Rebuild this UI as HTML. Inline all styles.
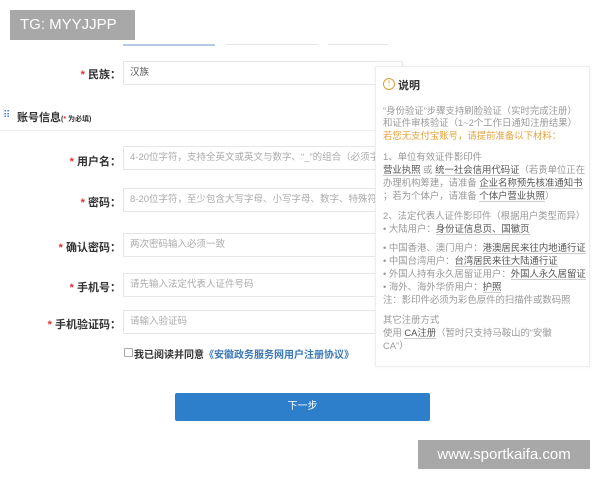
<!DOCTYPE html>
<html><head><meta charset="utf-8"><style>
body{margin:0;width:600px;height:480px;background:#fff;position:relative;overflow:hidden;font-family:"Liberation Sans","Noto Sans CJK SC",sans-serif;}
.a{position:absolute;}
.inp{position:absolute;left:123px;width:280px;height:24px;border:1px solid #e6e6e6;box-sizing:border-box;font-size:9.5px;color:#aaa;line-height:22px;padding-left:6px;white-space:nowrap;overflow:hidden;}
.lab{position:absolute;right:479px;font-size:11px;font-weight:bold;color:#333;white-space:nowrap;}
.lab b{color:#d33;font-weight:bold;}
.p{position:absolute;left:383px;font-size:9.4px;color:#999;white-space:nowrap;}
.p u{color:#555;text-decoration:none;border-bottom:1px solid #ccc;}
</style></head><body>
<div class="a" style="left:10px;top:10px;width:125px;height:30px;background:#a8a8a8;color:#fff;font-size:15px;line-height:30px;padding-left:10px;box-sizing:border-box">TG: MYYJJPP</div>
<div class="a" style="left:123px;top:44px;width:92px;height:2px;background:#b5c9e3"></div>
<div class="a" style="left:226px;top:44px;width:92px;height:1px;background:#e6e6e6"></div>
<div class="a" style="left:328px;top:44px;width:60px;height:1px;background:#e6e6e6"></div>
<div class="lab" style="top:66px"><b>* </b>民族：</div>
<div class="inp" style="top:61px;color:#555">汉族</div>
<div class="a" style="left:3px;top:110px;font-size:10px;color:#3a7bd5;letter-spacing:-1px">⠿</div>
<div class="a" style="left:17px;top:109px;font-size:11px;font-weight:bold;color:#333">账号信息<span style="font-size:7px">(<span style="color:#d33">* </span>为必填)</span></div>
<div class="a" style="left:0;top:130px;width:380px;height:1px;background:#eee"></div>
<div class="lab" style="top:153px"><b>* </b>用户名：</div>
<div class="inp" style="top:146px">4-20位字符，支持全英文或英文与数字、“_”的组合（必须字</div>
<div class="lab" style="top:194px"><b>* </b>密码：</div>
<div class="inp" style="top:188px">8-20位字符，至少包含大写字母、小写字母、数字、特殊符号中</div>
<div class="lab" style="top:239px"><b>* </b>确认密码：</div>
<div class="inp" style="top:233px">两次密码输入必须一致</div>
<div class="lab" style="top:279px"><b>* </b>手机号：</div>
<div class="inp" style="top:273px">请先输入法定代表人证件号码</div>
<div class="lab" style="top:316px"><b>* </b>手机验证码：</div>
<div class="inp" style="top:310px">请输入验证码</div>
<div class="a" style="left:124px;top:348px;width:7px;height:7px;border:1px solid #aaa;border-radius:1px"></div>
<div class="a" style="left:134px;top:346px;font-size:10px;font-weight:bold;color:#333">我已阅读并同意<span style="color:#3a78b8">《安徽政务服务网用户注册协议》</span></div>
<div class="a" style="left:175px;top:393px;width:255px;height:28px;background:#2d7fcc;border-radius:2px;color:#fff;font-size:10px;text-align:center;line-height:28px">下一步</div>
<div class="a" style="left:375px;top:66px;width:213px;height:299px;background:#fff;border:1px solid #eee;box-shadow:0 0 3px rgba(0,0,0,.06)"></div>
<div class="a" style="left:383px;top:78px;width:10px;height:10px;border:1px solid #e0a030;border-radius:50%;color:#e0a030;font-size:8px;line-height:10px;text-align:center">!</div>
<div class="a" style="left:398px;top:77px;font-size:11px;font-weight:bold;color:#333">说明</div>
<div class="p" style="top:103px">“身份验证”步骤支持刷脸验证（实时完成注册）</div>
<div class="p" style="top:115px">和证件审核验证（1~2个工作日通知注册结果）</div>
<div class="p" style="top:128px;color:#e6a23c">若您无支付宝账号，请提前准备以下材料：</div>
<div class="p" style="top:149px">1、单位有效证件影印件</div>
<div class="p" style="top:162px"><u>营业执照</u> 或 <u>统一社会信用代码证</u>（若贵单位正在</div>
<div class="p" style="top:175px">办理机构筹建，请准备 <u>企业名称预先核准通知书</u></div>
<div class="p" style="top:188px">；若为个体户，请准备 <u>个体户营业执照</u>）</div>
<div class="p" style="top:208px">2、法定代表人证件影印件（根据用户类型而异）</div>
<div class="p" style="top:221px">• 大陆用户：<u>身份证信息页、国徽页</u></div>
<div class="p" style="top:240px">• 中国香港、澳门用户：<u>港澳居民来往内地通行证</u></div>
<div class="p" style="top:253px">• 中国台湾用户：<u>台湾居民来往大陆通行证</u></div>
<div class="p" style="top:266px">• 外国人持有永久居留证用户：<u>外国人永久居留证</u></div>
<div class="p" style="top:279px">• 海外、海外华侨用户：<u>护照</u></div>
<div class="p" style="top:292px">注：影印件必须为彩色原件的扫描件或数码照</div>
<div class="p" style="top:312px">其它注册方式</div>
<div class="p" style="top:325px">使用 <u>CA注册</u>（暂时只支持马鞍山的“安徽</div>
<div class="p" style="top:338px">CA”）</div>
<div class="a" style="left:418px;top:440px;width:172px;height:29px;background:#a8a8a8;color:#fff;font-size:15px;line-height:29px;text-align:center">www.sportkaifa.com</div>
</body></html>
